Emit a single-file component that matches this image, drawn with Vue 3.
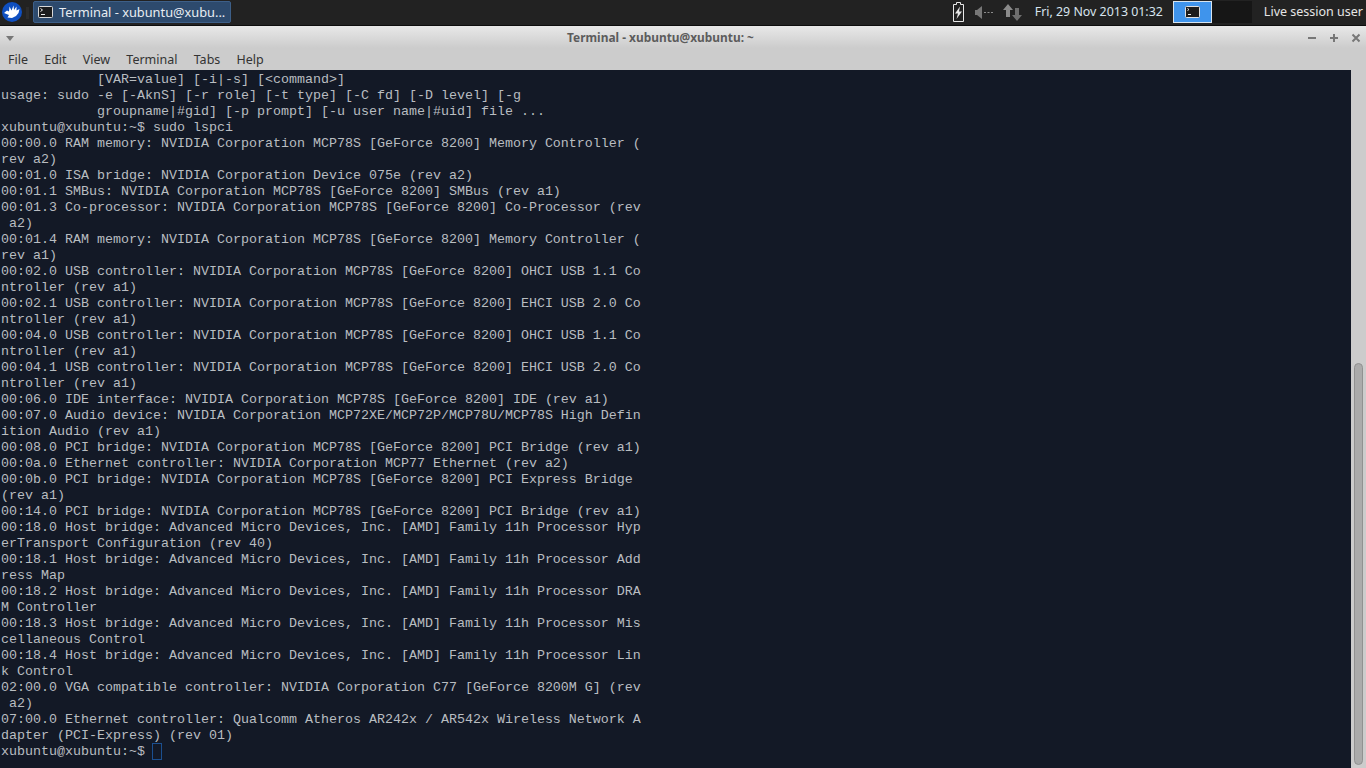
<script setup>
const lines = [
"            [VAR=value] [-i|-s] [<command>]",
"usage: sudo -e [-AknS] [-r role] [-t type] [-C fd] [-D level] [-g",
"            groupname|#gid] [-p prompt] [-u user name|#uid] file ...",
"xubuntu@xubuntu:~$ sudo lspci",
"00:00.0 RAM memory: NVIDIA Corporation MCP78S [GeForce 8200] Memory Controller (",
"rev a2)",
"00:01.0 ISA bridge: NVIDIA Corporation Device 075e (rev a2)",
"00:01.1 SMBus: NVIDIA Corporation MCP78S [GeForce 8200] SMBus (rev a1)",
"00:01.3 Co-processor: NVIDIA Corporation MCP78S [GeForce 8200] Co-Processor (rev",
" a2)",
"00:01.4 RAM memory: NVIDIA Corporation MCP78S [GeForce 8200] Memory Controller (",
"rev a1)",
"00:02.0 USB controller: NVIDIA Corporation MCP78S [GeForce 8200] OHCI USB 1.1 Co",
"ntroller (rev a1)",
"00:02.1 USB controller: NVIDIA Corporation MCP78S [GeForce 8200] EHCI USB 2.0 Co",
"ntroller (rev a1)",
"00:04.0 USB controller: NVIDIA Corporation MCP78S [GeForce 8200] OHCI USB 1.1 Co",
"ntroller (rev a1)",
"00:04.1 USB controller: NVIDIA Corporation MCP78S [GeForce 8200] EHCI USB 2.0 Co",
"ntroller (rev a1)",
"00:06.0 IDE interface: NVIDIA Corporation MCP78S [GeForce 8200] IDE (rev a1)",
"00:07.0 Audio device: NVIDIA Corporation MCP72XE/MCP72P/MCP78U/MCP78S High Defin",
"ition Audio (rev a1)",
"00:08.0 PCI bridge: NVIDIA Corporation MCP78S [GeForce 8200] PCI Bridge (rev a1)",
"00:0a.0 Ethernet controller: NVIDIA Corporation MCP77 Ethernet (rev a2)",
"00:0b.0 PCI bridge: NVIDIA Corporation MCP78S [GeForce 8200] PCI Express Bridge",
"(rev a1)",
"00:14.0 PCI bridge: NVIDIA Corporation MCP78S [GeForce 8200] PCI Bridge (rev a1)",
"00:18.0 Host bridge: Advanced Micro Devices, Inc. [AMD] Family 11h Processor Hyp",
"erTransport Configuration (rev 40)",
"00:18.1 Host bridge: Advanced Micro Devices, Inc. [AMD] Family 11h Processor Add",
"ress Map",
"00:18.2 Host bridge: Advanced Micro Devices, Inc. [AMD] Family 11h Processor DRA",
"M Controller",
"00:18.3 Host bridge: Advanced Micro Devices, Inc. [AMD] Family 11h Processor Mis",
"cellaneous Control",
"00:18.4 Host bridge: Advanced Micro Devices, Inc. [AMD] Family 11h Processor Lin",
"k Control",
"02:00.0 VGA compatible controller: NVIDIA Corporation C77 [GeForce 8200M G] (rev",
" a2)",
"07:00.0 Ethernet controller: Qualcomm Atheros AR242x / AR542x Wireless Network A",
"dapter (PCI-Express) (rev 01)",
];
const menus = ["File", "Edit", "View", "Terminal", "Tabs", "Help"];
</script>

<template>
  <div class="screen">
    <header class="panel">
      <svg class="logo" width="22" height="22" viewBox="0 0 22 22">
        <circle cx="11" cy="10" r="10" fill="#0f4fc0" />
        <path d="M3 11 L6 8.5 L8 9.5 L8.5 4.5 L10.5 8.5 L12.5 3.5 L13 8 L15.5 4.5 L15.5 8.5 L18.5 7 L17.5 11 L15 14 L11 16 L6.5 15.5 L8 13 Z" fill="#fff" />
      </svg>
      <span class="grip"></span>
      <div class="task">
        <svg class="term-ico" width="15" height="12" viewBox="0 0 15 12">
          <rect x="0.5" y="0.5" width="14" height="11" rx="1" fill="#1c1c1c" stroke="#d8d8d8" />
          <path d="M2.5 2.5 L4.5 4 L2.5 5.5 M3 8.5 H7" stroke="#eee" fill="none" />
        </svg>
        <span class="task-label">Terminal - xubuntu@xubu...</span>
      </div>
      <div class="spacer"></div>
      <svg class="tray battery" width="11" height="20" viewBox="0 0 11 20">
        <path d="M3.5 0.5 H7.5 V2.5 H10.5 V19.5 H0.5 V2.5 H3.5 Z" fill="none" stroke="#e8e8e8" />
        <path d="M7 4.5 L2 11.5 H5 L3.5 17 L9 9.5 H6 Z" fill="#e8e8e8" />
      </svg>
      <svg class="tray speaker" width="18" height="13" viewBox="0 0 18 13">
        <path d="M0 4 H2 L7 0 V13 L2 9 H0 Z" fill="#777" />
        <path d="M9 6.5 H11 M12.5 6.5 H14.5 M16 6.5 H18" stroke="#8c8c8c" />
      </svg>
      <svg class="tray net" width="19" height="17" viewBox="0 0 19 17">
        <path d="M5 0 L10 6 H7 V13 H3 V6 H0 Z" fill="#8a8a8a" />
        <path d="M14 17 L19 11 H16 V4 H12 V11 H9 Z" fill="#6e6e6e" />
      </svg>
      <span class="clock">Fri, 29 Nov 2013 01:32</span>
      <div class="pager">
        <div class="desk active">
          <svg width="15" height="12" viewBox="0 0 15 12">
            <rect x="0.5" y="0.5" width="14" height="11" rx="1" fill="#1c1c1c" stroke="#e0e0e0" />
            <path d="M2.5 2.5 L4 3.5 L2.5 4.5 M3 8.5 H6" stroke="#eee" fill="none" />
          </svg>
        </div>
        <div class="desk"></div>
      </div>
      <span class="user">Live session user</span>
    </header>

    <div class="titlebar">
      <span class="arrow"></span>
      <span class="title">Terminal - xubuntu@xubuntu: ~</span>
      <div class="wm">
        <svg width="10" height="10" viewBox="0 0 10 10"><path d="M1 5 H9" stroke="#777" stroke-width="2" /></svg>
        <svg width="10" height="10" viewBox="0 0 10 10"><path d="M1 5 H9 M5 1 V9" stroke="#777" stroke-width="2" /></svg>
        <svg width="10" height="10" viewBox="0 0 10 10"><path d="M1.5 1.5 L8.5 8.5 M8.5 1.5 L1.5 8.5" stroke="#777" stroke-width="2" /></svg>
      </div>
    </div>

    <nav class="menubar">
      <span v-for="m in menus" :key="m">{{ m }}</span>
    </nav>

    <div class="body">
      <div class="terminal">
        <div v-for="(l, i) in lines" :key="i" class="line">{{ l }}</div>
        <div class="line">xubuntu@xubuntu:~$ <span class="cursor"></span></div>
      </div>
      <div class="scrollbar">
        <div class="thumb"></div>
      </div>
    </div>
  </div>
</template>

<style>
html, body { margin: 0; overflow: hidden; background: #131926; }
</style>

<style scoped>
.screen {
  width: 1366px;
  height: 768px;
  display: flex;
  flex-direction: column;
  overflow: hidden;
  font-family: "Noto Sans", sans-serif;
}
.panel {
  height: 25px;
  flex: none;
  display: flex;
  align-items: center;
  background: #222222;
  border-bottom: 1px solid #0d0d0d;
  color: #e0e6ec;
  font-size: 12.5px;
}
.logo { margin: 0 0 0 1px; flex: none; }
.grip { width: 3px; height: 12px; margin: 0 4px 0 3px; background: #2c2c2c; flex: none; }
.task {
  width: 198px;
  height: 22px;
  display: flex;
  align-items: center;
  box-sizing: border-box;
  padding-left: 4px;
  gap: 6px;
  background: #2d4a6d;
  border: 1px solid #3d5f88;
  border-radius: 2px;
  color: #e8edf2;
  white-space: nowrap;
  margin-bottom: 1px;
}
.task-label { font-size: 12.8px; margin-bottom: 1px; }
.spacer { flex: 1; }
.tray { flex: none; margin-bottom: 1px; }
.battery { margin-right: 11px; }
.speaker { margin-right: 10px; }
.net { margin-right: 13px; }
.clock { margin: 0 10px 2px 0; white-space: nowrap; color: #d8e4ee; font-size: 12.4px; }
.pager { display: flex; height: 22px; margin-bottom: 1px; }
.desk {
  width: 40px;
  box-sizing: border-box;
  background: #161616;
  display: flex;
  align-items: center;
  justify-content: center;
}
.desk.active { width: 39px; background: #3f94ec; border: 1px solid #d8e4ee; }
.user { margin: 0 3px 2px 12px; white-space: nowrap; color: #e6e6e6; }
.titlebar {
  height: 22px;
  flex: none;
  display: flex;
  align-items: center;
  justify-content: center;
  position: relative;
  box-sizing: border-box;
  padding-right: 45px;
  background: linear-gradient(#e8e8e8, #cccccc);
  color: #5c5c5c;
  font-size: 11.9px;
  font-weight: 700;
}
.arrow {
  position: absolute;
  left: 6px;
  top: 10px;
  border: 4px solid transparent;
  border-top: 5px solid #777;
  border-bottom: 0;
}
.wm {
  position: absolute;
  right: 5px;
  top: 7px;
  display: flex;
  gap: 12px;
}
.menubar {
  height: 22px;
  flex: none;
  display: flex;
  align-items: center;
  gap: 16.2px;
  padding-left: 8px;
  background: #cccccc;
  color: #333;
  font-size: 12.5px;
}
.body { flex: 1; display: flex; min-height: 0; }
.terminal {
  flex: 1;
  box-sizing: border-box;
  padding: 2px 0 0 1px;
  background: #131926;
  color: #b9bdc1;
  font-family: "Liberation Mono", monospace;
  font-size: 13.33px;
  line-height: 16px;
  overflow: hidden;
}
.line { height: 16px; white-space: pre; }
.cursor {
  display: inline-block;
  width: 8px;
  height: 15px;
  border: 1px solid #1b4f8f;
  box-sizing: content-box;
  vertical-align: top;
  margin: -1px 0 0 -1px;
}
.scrollbar {
  width: 15px;
  flex: none;
  box-sizing: border-box;
  padding: 293px 3px 3px 3px;
  background: #cccccc;
}
.thumb {
  height: 100%;
  background: #ababab;
  border: 1px solid #919191;
  border-radius: 5px;
  box-sizing: border-box;
}
</style>
